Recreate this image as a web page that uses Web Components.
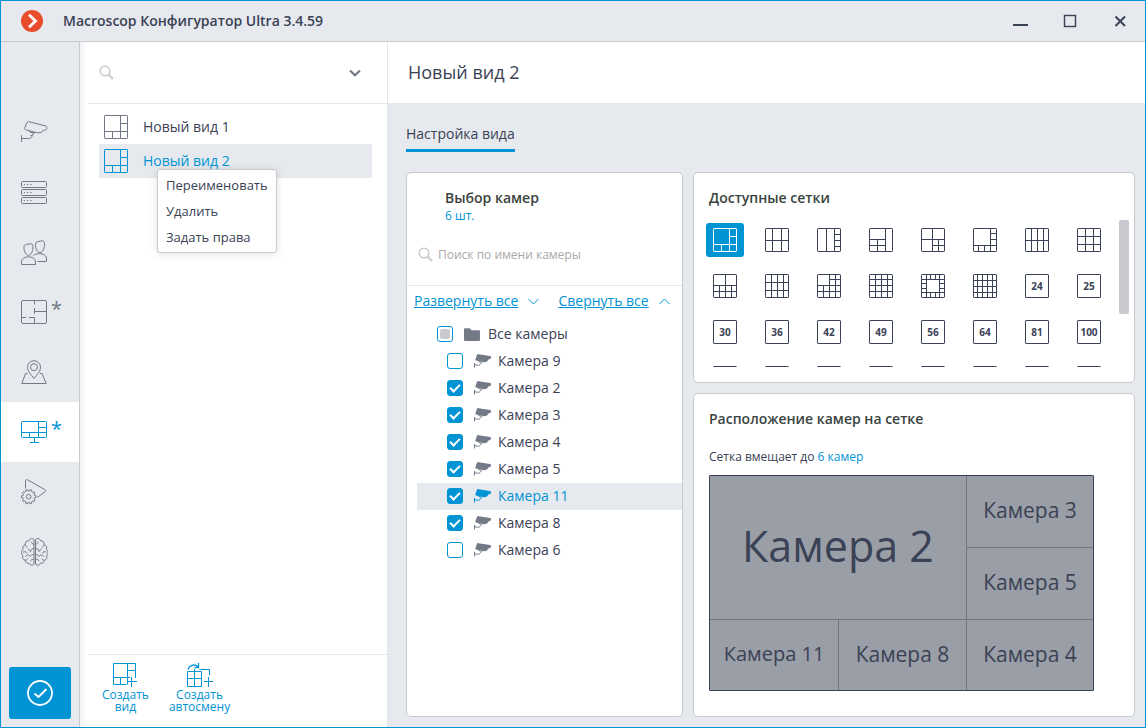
<!DOCTYPE html>
<html lang="ru">
<head>
<meta charset="utf-8">
<meta name="viewport" content="width=device-width, initial-scale=1">
<title>Macroscop Конфигуратор Ultra 3.4.59</title>
<style>
  :root {
    --accent: #0094d4;
    --ink: #3a4255;
    --heading: #3a4340;
    --muted: #737987;
    --surface: #e6e9ee;
    --line: #c9c9cf;
    --soft-line: #e4e6eb;
  }
  html, body { margin: 0; min-height: 100%; }
  body { font: 14px/20px "Open Sans", "Noto Sans", sans-serif; color: var(--ink); background: var(--surface); }
</style>
</head>
<body>
<app-window>
  <title-bar slot="title">Macroscop Конфигуратор Ultra 3.4.59</title-bar>

  <side-nav slot="nav">
    <nav-item icon="camera" label="Камеры"></nav-item>
    <nav-item icon="servers" label="Серверы"></nav-item>
    <nav-item icon="users" label="Пользователи"></nav-item>
    <nav-item icon="plan" label="Планы" changed></nav-item>
    <nav-item icon="map" label="Карты"></nav-item>
    <nav-item icon="views" label="Виды" changed active></nav-item>
    <nav-item icon="scenario" label="Сценарии"></nav-item>
    <nav-item icon="brain" label="Аналитика"></nav-item>
  </side-nav>

  <view-panel slot="panel">
    <view-item>Новый вид 1</view-item>
    <view-item active>Новый вид 2
      <context-menu slot="menu"></context-menu>
    </view-item>
    <create-action slot="actions" icon="newView">Создать<br>вид</create-action>
    <create-action slot="actions" icon="newRotation">Создать<br>автосмену</create-action>
  </view-panel>

  <view-editor slot="content">
    <span slot="heading">Новый вид 2</span>
    <span slot="tab">Настройка вида</span>
    <camera-picker slot="left">
      <camera-row root>Все камеры</camera-row>
      <camera-row>Камера 9</camera-row>
      <camera-row checked>Камера 2</camera-row>
      <camera-row checked>Камера 3</camera-row>
      <camera-row checked>Камера 4</camera-row>
      <camera-row checked>Камера 5</camera-row>
      <camera-row checked active>Камера 11</camera-row>
      <camera-row checked>Камера 8</camera-row>
      <camera-row>Камера 6</camera-row>
    </camera-picker>
    <grid-gallery slot="right"></grid-gallery>
    <grid-preview slot="right"></grid-preview>
  </view-editor>
</app-window>

<script>
const svg = (w, h, body, extra = '') =>
  `<svg width="${w}" height="${h}" viewBox="0 0 ${w} ${h}" fill="none" stroke="currentColor" aria-hidden="true" ${extra}>${body}</svg>`;

const base = `*{box-sizing:border-box} svg{display:block;flex:none}
  button{font:inherit;color:inherit;background:none;border:0;padding:0;margin:0;cursor:pointer}
  a{color:inherit}`;

/* Split lines inside a 24px layout square */
const layouts = [
  'M16.5 0V24M0 16.5H24M16.5 8.5H24M8.5 16.5V24',
  'M7.5 0V24M16.5 0V24M0 12.5H24',
  'M9.5 0V24M17.5 0V24M17.5 6.5H24M17.5 12.5H24M17.5 18.5H24',
  'M16.5 0V24M0 11.5H16M8.5 11.5V24M0 17.5H16',
  'M11.5 0V24M0 11.5H24M17.5 11.5V24M11.5 17.5H24',
  'M17.5 0V24M0 17.5H24M17.5 5.5H24M17.5 11.5H24M5.5 17.5V24M11.5 17.5V24',
  'M6.5 0V24M12.5 0V24M18.5 0V24M0 12.5H24',
  'M8.5 0V24M16.5 0V24M0 8.5H24M0 16.5H24',
  'M0 11.5H24M0 17.5H24M12.5 0V24M6.5 11.5V24M18.5 11.5V24',
  'M6.5 0V24M12.5 0V24M18.5 0V24M0 8.5H24M0 16.5H24',
  'M0 11.5H24M0 17.5H24M12.5 0V24M18.5 0V24M6.5 11.5V24M12.5 5.5H24',
  'M6.5 0V24M12.5 0V24M18.5 0V24M0 5.5H24M0 11.5H24M0 17.5H24',
  'M5.5 0V24M18.5 0V24M0 5.5H24M0 18.5H24M0 9.5H5M0 14.5H5M18.5 9.5H24M18.5 14.5H24M9.5 0V5M14.5 0V5M9.5 18.5V24M14.5 18.5V24',
  'M4.5 0V24M9.5 0V24M14.5 0V24M19.5 0V24M0 6.5H24M0 12.5H24M0 18.5H24'
];
const layoutIcon = d => svg(24, 24, `<rect x=".5" y=".5" width="23" height="23" rx=".6"/><path d="${d}"/>`);
const counts = [24, 25, 30, 36, 42, 49, 56, 64, 81, 100];

const gear = (() => {
  let d = '';
  const n = 10, cx = 7.7, cy = 17.7;
  for (let i = 0; i < n; i++) {
    [[-.5, 5.6], [-.27, 5.9], [-.24, 7.2], [.24, 7.2], [.27, 5.9]].forEach(([o, r], k) => {
      const a = (i + o) * 2 * Math.PI / n;
      d += `${i || k ? 'L' : 'M'}${(cx + r * Math.cos(a)).toFixed(2)} ${(cy + r * Math.sin(a)).toFixed(2)}`;
    });
  }
  return d + 'Z';
})();

const brainHalf = `<path d="M13 1.6C11-.4 8.4.6 8 2.8 5.6 2.4 3.800 4.500 4.300 6.600 2 7.300 1.400 9.500 2.200 11.200 0 12.800 0 16 1.800 17.400 1 20 2.200 21.800 4.200 22.200 4.300 24.600 6.200 25.600 8 25.100 9 27.600 11.800 27.800 13 26Z"/>
 <path d="M13 6.500C11.500 6 10.500 5 10.500 3.800M4.300 6.600C4.500 8 5.300 8.700 6.500 9M13 10.500C10.600 10.500 9.400 12 9.600 14M9.600 12.400C8.300 12.400 7.300 11.800 7 10.600M2 14.200C4 13.200 5.800 13.800 6.200 15.600M4.500 18.700C5.500 16.800 8.500 16.500 9.400 18.500M13 16.500C11 16.500 10 17.500 9.400 18.500M13 21.500C11 21 9.800 21.800 9.500 23.200M4.200 22.200C5.200 22.300 6.400 21.600 6.800 20.500"/>`;

const icons = {
  camera: svg(27, 22, `<path d="M6 1.500C6.300.8 6.800.4 7.600.6L24 4.800C25.500 5.200 26 6.200 25.800 7.400C25.400 9 24.500 9.400 22.200 9.200L20.400 11.600 16.500 11.900 4.600 8.700C3.700 8.400 3.300 7.800 3.600 7Z"/><path d="M7.500 9.500L9 11.200 13 12 14.500 11.300M12.500 12L11.500 14.200C10.600 16.500 9.500 17.500 7.500 17.500H.5M.5 14.200V21M9.500 14.500L11.400 14.700"/>`),
  servers: svg(26, 23, `<rect x=".5" y=".5" width="25" height="6" rx="1"/><rect x=".5" y="8.500" width="25" height="6" rx="1"/><rect x=".5" y="16.500" width="25" height="6" rx="1"/><path stroke-dasharray="1.300 2" d="M2.700 3.500H10.700M2.700 11.500H10.700M2.700 19.500H10.700"/>`),
  users: svg(26, 25, `<path d="M.5 24.500V21C1 18.500 4 16.800 7.500 16.800S14 18.500 14.500 21V24.500Z"/><path d="M3 6.500C3.300 4.800 4.200 4.600 5.500 4.400 8 4 9 3.800 10.300 3.800 11.500 4 12 5.500 11.900 8 11.700 11.500 10 15.300 7.500 15.300S3.300 11.500 3 8.800ZM14.600 4C14.900 2.300 15.600 1.900 17 1.600 19 1.200 20 .8 21.800.7 23.200 1 23.600 3 23.500 5.300 23.200 9 21.500 12.500 19 12.500S14.800 9 14.600 6.500ZM12.500 15.300C14 14.200 16.500 13.600 18.500 13.600 22 13.600 25 15.200 25.500 18V21.500H16.500"/>`),
  plan: svg(26, 24, `<rect x=".5" y=".5" width="25" height="23" rx="1.500"/><path d="M13.500 .5V4.500M13.500 8V14M13.500 11.500H25.500M0 17.500H5M8 17.500H13.500V23.500"/>`),
  map: svg(26, 24, `<path d="M6.500 13.500H4.500L.8 23.500H25.200L21 13.500H19M13 18.500C10 14.500 6.500 11.500 6.500 7.200A6.500 6.500 0 0 1 19.500 7.200C19.500 11.500 16 14.500 13 18.500Z"/><circle cx="13" cy="7.200" r="3.500"/>`),
  views: svg(26, 22, `<rect x=".5" y=".5" width="25" height="16" rx="1"/><path d="M17.500 .5V16.500M.5 11.500H25.500M17.500 6.500H25.500M8.500 11.500V16.500M13.500 16.500V21.500M9 21.500H18"/>`),
  scenario: svg(26, 26, `<path d="M4.500 9.500V2C4.500.6 5.500.3 6.600.9L23.600 10.400C25 11.200 25 12 24 12.700L16.200 18.500"/><path d="${gear}"/><circle cx="7.700" cy="17.700" r="2.300"/>`),
  brain: svg(27, 28, `${brainHalf}<g transform="matrix(-1 0 0 1 27.500 0)">${brainHalf}</g>`),
  search: svg(15, 15, `<circle cx="6" cy="6" r="4.800"/><path stroke-width="2" d="M9.500 9.500L14 14"/>`, 'stroke-width="1.500"'),
  cameraFill: svg(17, 14, `<path fill="currentColor" stroke="none" d="M3 .8C3.300.1 3.800 0 4.500.2L16 1.900C17 2.200 17.200 2.800 16.900 3.800 16.600 4.900 16 5.200 14.700 5.300L13 7.500 10.500 8.300 2 6.400C1.400 6.200 1.200 5.800 1.500 5.100Z"/><path d="M4.500 7.500L8 8.300 6.500 9.800C5.800 11 5 11.400 3.500 11.200L.5 10.800M.5 9V13.500"/>`),
  folder: svg(16, 13, `<path fill="currentColor" stroke="none" d="M0 1.200Q0 .2 1 .2H5.500L7.500 2.200H15Q16 2.200 16 3.200V12Q16 13 15 13H1Q0 13 0 12Z"/>`),
  newView: svg(24, 24, `<path d="M22.500 15V.5H.5V21.500H13.500M14.500 .5V21.500M.5 14.500H17M14.500 7.500H22.500M7.500 14.500V21.500M18.500 14V24M14 18.500H24"/>`),
  newRotation: svg(26, 24, `<path d="M.5 8.500H14.500V23.500H.5ZM7.500 6V23.500M.5 15.500H14.500M12.500 6.500H22.500V12.500M21.500 14V24M17 18.500H26"/><path stroke-width="1.300" d="M1 6.500C2 2.500 7 .5 11 3.500M11.500 0V4.500H7.500"/>`),
  down: svg(11, 7, `<path d="M.5 1L5.500 6 10.500 1"/>`),
  up: svg(11, 7, `<path d="M.5 6L5.500 1 10.500 6"/>`)
};

function component(name, css, html) {
  const template = document.createElement('template');
  customElements.define(name, class extends HTMLElement {
    connectedCallback() {
      if (this.shadowRoot) return;
      template.innerHTML = `<style>${base}${css}</style>${typeof html === 'function' ? html(this) : html}`;
      this.attachShadow({ mode: 'open' }).append(template.content.cloneNode(true));
      this.shadowRoot.querySelectorAll('[data-mixed]').forEach(box => { box.indeterminate = true; });
    }
  });
}

component('app-window', `
  :host{display:grid;box-sizing:border-box;min-height:100vh;grid-template-rows:auto 1fr;border:1px solid var(--accent);background:var(--surface)}
  .body{display:grid;grid-template-columns:79px 308px minmax(0,1fr)}`,
  `<slot name="title"></slot><div class="body"><slot name="nav"></slot><slot name="panel"></slot><slot name="content"></slot></div>`);

component('title-bar', `
  :host{display:block;border-bottom:1px solid var(--line)}
  header{display:flex;align-items:center;height:40px;padding:0 16px 0 20px}
  h1{flex:1;margin:0 0 0 20px;font-size:14px;font-weight:600}
  .logo{color:#fff}
  .buttons{display:flex;gap:32px}
  button{display:grid;place-items:center;width:18px;height:18px}`,
  `<header><span class="logo">${svg(22, 22, '<circle cx="11" cy="11" r="11" fill="#ea4d2c" stroke="none"/><path stroke-width="2.800" d="M8 4.800L14.500 11 8 17.200"/>')}</span>
   <h1><slot></slot></h1>
   <div class="buttons">
    <button aria-label="Свернуть">${svg(18, 18, '<path stroke-width="2" d="M2 13H17"/>')}</button>
    <button aria-label="Развернуть">${svg(18, 18, '<rect x="3.500" y="3.500" width="11" height="11" stroke-width="1.400"/>')}</button>
    <button aria-label="Закрыть">${svg(18, 18, '<path stroke-width="2" d="M4.500 4.500L14 14M14 4.500L4.500 14"/>')}</button>
   </div></header>`);

component('side-nav', `
  :host{display:block;border-right:1px solid var(--line)}
  nav{display:flex;flex-direction:column;height:100%;padding-top:60px}
  .apply{display:grid;place-items:center;height:52px;margin:auto 8px 8px;border-radius:3px;background:var(--accent);color:#fff}`,
  `<nav><slot></slot><button class="apply" aria-label="Применить">${svg(26, 26, '<circle cx="13" cy="13" r="12"/><path d="M7.500 13.500L11.500 17 19.500 9"/>', 'stroke-width="1.800"')}</button></nav>`);

component('nav-item', `
  :host{display:block;color:var(--muted)}
  :host([active]){color:var(--accent);background:#fff}
  a{display:flex;align-items:center;height:60px;padding-left:20px;text-decoration:none}
  span{margin:0 0 6px 4px;font-size:20px;line-height:20px}`,
  el => `<a href="#${el.getAttribute('icon')}" aria-label="${el.getAttribute('label')}">${icons[el.getAttribute('icon')]}${el.hasAttribute('changed') ? '<span>*</span>' : ''}</a>`);

component('view-panel', `
  :host{display:flex;flex-direction:column;padding-left:8px;background:linear-gradient(90deg,#f1f3f6,#fff 8px);border-right:1px solid var(--soft-line)}
  .search{display:flex;align-items:center;height:62px;padding:0 26px 0 11px;border-bottom:1px solid var(--soft-line);color:var(--line)}
  input{flex:1;min-width:0;margin:0 6px;border:0;outline:0;font:inherit;color:var(--ink);background:none}
  button{color:var(--muted)}
  .list{flex:1;padding:6px 15px 0 11px}
  .actions{display:flex;gap:20px;height:73px;padding:8px 14px 0;border-top:1px solid var(--soft-line)}`,
  `<div class="search">${icons.search}<input type="search" aria-label="Поиск вида"><button aria-label="Показать параметры">${svg(12, 8, '<path stroke-width="2.200" d="M1 1.500L6 6.300 11 1.500"/>')}</button></div>
   <div class="list"><slot></slot></div><div class="actions"><slot name="actions"></slot></div>`);

component('view-item', `
  :host{display:block;position:relative}
  :host([active]) button{color:var(--accent);background:var(--surface)}
  :host([active]) svg{color:var(--accent)}
  button{display:flex;align-items:center;gap:15px;width:100%;height:34px;padding-left:5px;text-align:left}
  svg{color:var(--muted)}`,
  `<button>${layoutIcon(layouts[0])}<span><slot></slot></span></button><slot name="menu"></slot>`);

component('context-menu', `
  :host{position:absolute;z-index:1;left:58px;top:25px;color:var(--ink)}
  menu{display:flex;flex-direction:column;gap:1px;margin:0;padding:2px 8px 3px;list-style:none;background:#fff;border:1px solid var(--line);border-radius:3px;box-shadow:0 1px 8px rgba(0,0,0,.12)}
  button{display:block;height:25px;font-size:13px;white-space:nowrap}`,
  `<menu><li><button>Переименовать</button></li><li><button>Удалить</button></li><li><button>Задать права</button></li></menu>`);

component('create-action', `
  :host{display:block;color:var(--accent)}
  button{display:flex;flex-direction:column;align-items:center;gap:2px;font-size:12px;line-height:12px}`,
  el => `<button>${icons[el.getAttribute('icon')]}<span><slot></slot></span></button>`);

component('view-editor', `
  :host{display:flex;flex-direction:column}
  h2{margin:0;padding:0 20px;background:#fff;font-size:18px;line-height:61px;font-weight:400}
  .tabs{display:flex;padding:21px 18px 20px}
  .tabs a{padding-bottom:5px;border-bottom:3px solid var(--accent);text-decoration:none;line-height:20px}
  .cards{flex:1;display:grid;grid-template-columns:277px minmax(0,1fr);gap:10px;padding:0 10px 10px 18px}
  .right{display:flex;flex-direction:column;gap:10px}`,
  `<h2><slot name="heading"></slot></h2><div class="tabs"><a href="#settings"><slot name="tab"></slot></a></div>
   <div class="cards"><slot name="left"></slot><div class="right"><slot name="right"></slot></div></div>`);

const card = `:host{display:block;background:#fff;border:1px solid var(--line);border-radius:5px}
  h3{margin:0;font-size:14px;line-height:20px;font-weight:600;color:var(--heading)}`;

component('camera-picker', `${card}
  h3{padding:15px 38px 0}
  .count{padding-left:38px;font-size:12px;line-height:16px;color:var(--accent)}
  .search{display:flex;align-items:center;height:62px;padding:0 11px;border-bottom:1px solid var(--soft-line);color:var(--line)}
  input{flex:1;min-width:0;margin-left:5px;padding:0;border:0;outline:0;font:12px/18px "Open Sans","Noto Sans",sans-serif;color:var(--ink)}
  input::placeholder{color:#a9a9ad;opacity:1}
  .links{display:flex;align-items:center;height:35px;padding:0 7px 6px;color:var(--accent);white-space:nowrap}
  .links svg{margin:2px 19px 0 10px}
  .links svg:last-child{margin-right:0}`,
  `<h3>Выбор камер</h3><div class="count">6 шт.</div>
   <div class="search">${icons.search}<input type="search" aria-label="Поиск по имени камеры" placeholder="Поиск по имени камеры"></div>
   <div class="links"><a href="#expand">Развернуть все</a>${icons.down}<a href="#collapse">Свернуть все</a>${icons.up}</div>
   <slot></slot>`);

component('camera-row', `
  :host{display:block}
  label{display:flex;align-items:center;height:27px;margin-left:10px;padding:0 0 1px 30px}
  :host([root]) label{padding-left:20px}
  :host([active]) label{background:var(--surface);color:var(--accent)}
  input{appearance:none;display:grid;place-items:center;width:16px;height:16px;margin:0 11px 0 0;border:1px solid var(--accent);border-radius:3px;background:#fff}
  input:checked{background:var(--accent)}
  input:checked::before{content:"";box-sizing:border-box;width:10px;height:6px;margin-bottom:3px;border:solid #fff;border-width:0 0 2px 2px;transform:rotate(-45deg)}
  input:indeterminate::before{content:"";width:10px;height:10px;border-radius:2px;background:var(--line)}
  svg{margin-right:7px;color:var(--muted)}
  :host([root]) svg{margin-right:8px}
  :host([active]) svg{color:var(--accent)}`,
  el => `<label><input type="checkbox" ${el.hasAttribute('checked') ? 'checked' : ''} ${el.hasAttribute('root') ? 'data-mixed' : ''}>${el.hasAttribute('root') ? icons.folder : icons.cameraFill}<span><slot></slot></span></label>`);

component('grid-gallery', `${card}
  h3{padding:15px 15px 0}
  .scroll{display:flex;justify-content:space-between;padding:12px 5px 15px 12px}
  .tiles{display:grid;grid-template-columns:repeat(8,38px);grid-auto-rows:34px;gap:12px 14px;height:147px;padding-top:3px;overflow:hidden}
  button{display:grid;place-items:center;border-radius:3px}
  button.on{background:var(--accent);color:#fff}
  .n{width:24px;height:24px;border:1px solid;border-radius:1px;font-size:10px;line-height:22px;font-weight:700;text-align:center}
  .thumb{width:10px;height:94px;border-radius:2px;background:var(--line)}`,
  `<h3>Доступные сетки</h3><div class="scroll"><div class="tiles">${
    layouts.map((d, i) => `<button class="${i ? '' : 'on'}" aria-label="Сетка ${i + 1}">${layoutIcon(d)}</button>`).join('')
  }${counts.map(n => `<button><span class="n">${n}</span></button>`).join('')
  }${'<button aria-label="Своя сетка"><span class="n"></span></button>'.repeat(8)}</div><div class="thumb"></div></div>`);

component('grid-preview', `${card}
  :host{flex:1}
  h3{padding:15px 15px 0}
  p{margin:0;padding:20px 15px 10px;font-size:12px;line-height:16px}
  p a{color:var(--accent);text-decoration:none}
  .grid{display:grid;grid-template:71px 71px 70px / 128fr 127fr 126fr;gap:1px;max-width:385px;margin:0 15px 25px;border:1px solid var(--ink);border-radius:1px;background:#73757a;font-size:21px}
  .grid div{display:grid;place-items:center;padding-bottom:3px;background:#9a9ea7}
  .grid .big{grid-area:1/1/3/3;font-size:43px}
  .grid .long{font-size:20px}`,
  `<h3>Расположение камер на сетке</h3><p>Сетка вмещает до <a href="#cameras">6 камер</a></p>
   <div class="grid"><div class="big">Камера 2</div><div>Камера 3</div><div>Камера 5</div><div class="long">Камера 11</div><div>Камера 8</div><div>Камера 4</div></div>`);
</script>
</body>
</html>
